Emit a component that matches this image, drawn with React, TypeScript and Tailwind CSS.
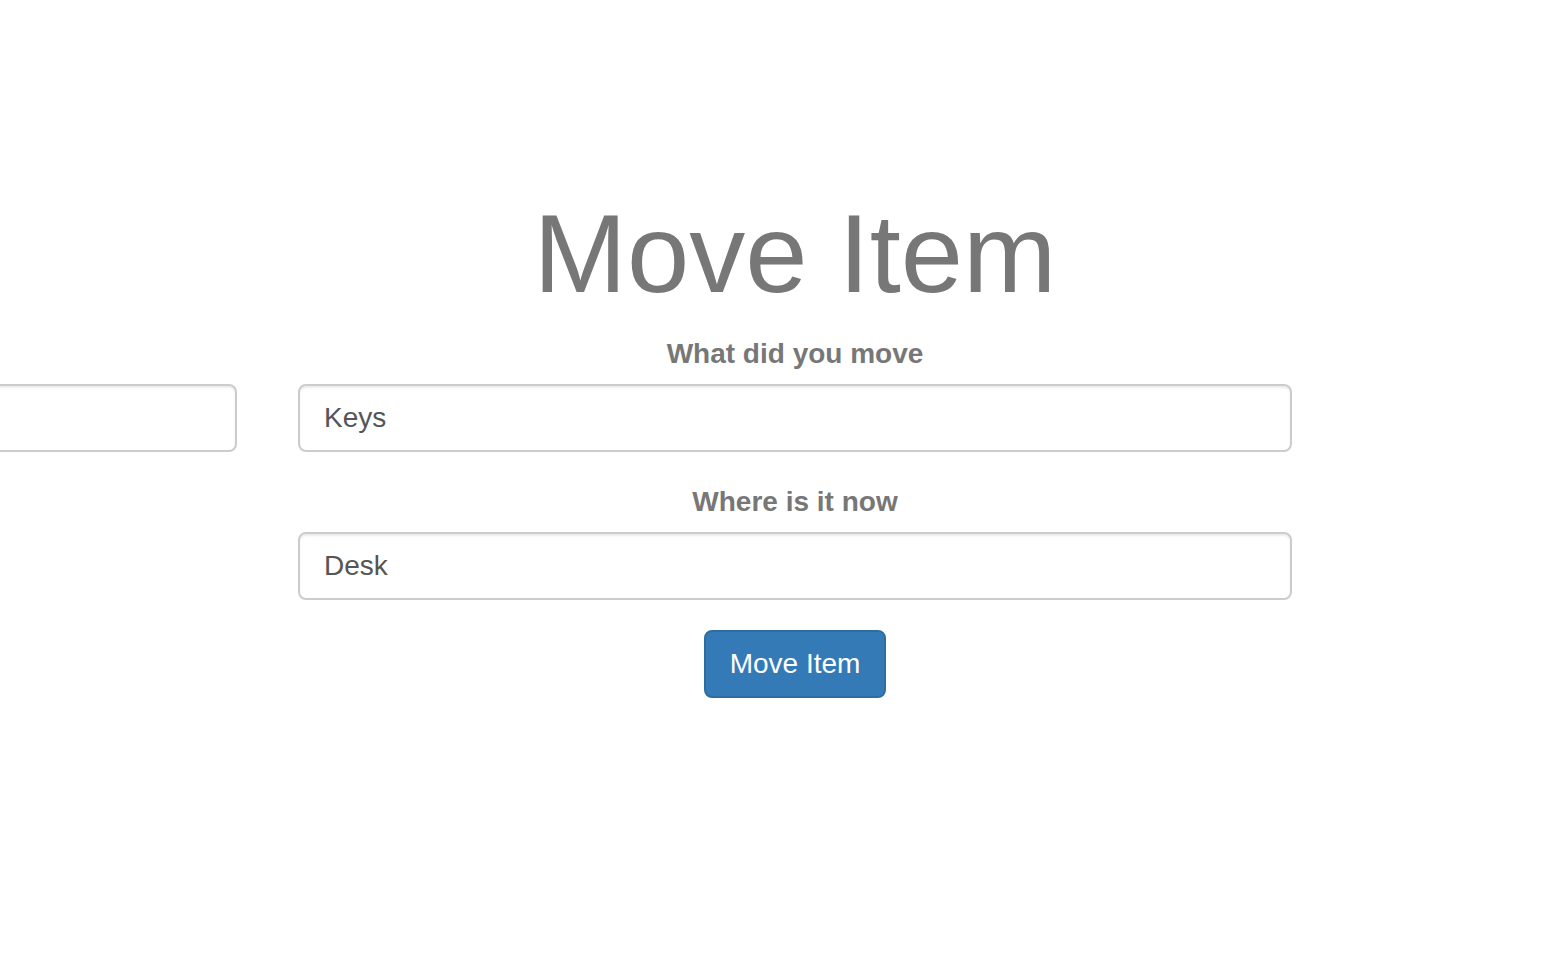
import React from 'react';

const inputClass =
  'h-[68px] w-[994px] shrink-0 rounded-[8px] border-2 border-[#ccc] bg-white px-[24px] text-[28px] text-[#555] shadow-[inset_0_2px_2px_rgba(0,0,0,0.075)] outline-none';

interface FieldProps {
  label: string;
  value: string;
  withSibling?: boolean;
}

const Field: React.FC<FieldProps> = ({ label, value, withSibling = false }) => (
  <div className="mb-[30px] flex w-[994px] flex-col items-center">
    <label className="mb-[10px] block h-[40px] text-[28px] leading-[40px] font-bold text-[#777]">
      {label}
    </label>
    <div className="flex w-full gap-[61px]">
      {withSibling && <input className={`${inputClass} ml-[-1055px]`} readOnly />}
      <input className={inputClass} defaultValue={value} readOnly />
    </div>
  </div>
);

const App: React.FC = () => {
  return (
    <div
      className="min-h-[954px] w-full overflow-hidden bg-white"
      style={{ fontFamily: '"Liberation Sans", Arial, sans-serif' }}
    >
      <div className="flex flex-col items-center pt-[192px] pl-[42px]">
        <h1 className="h-[123px] text-[112px] leading-[123px] font-normal text-[#777]">
          Move Item
        </h1>
        <div className="mt-[19px] flex flex-col">
          <Field label="What did you move" value="Keys" withSibling />
          <Field label="Where is it now" value="Desk" />
        </div>
        <button className="h-[68px] w-[182px] rounded-[8px] border-2 border-[#2e6da4] bg-[#337ab7] text-[28px] leading-[40px] text-white">
          Move Item
        </button>
      </div>
    </div>
  );
};

export default App;
